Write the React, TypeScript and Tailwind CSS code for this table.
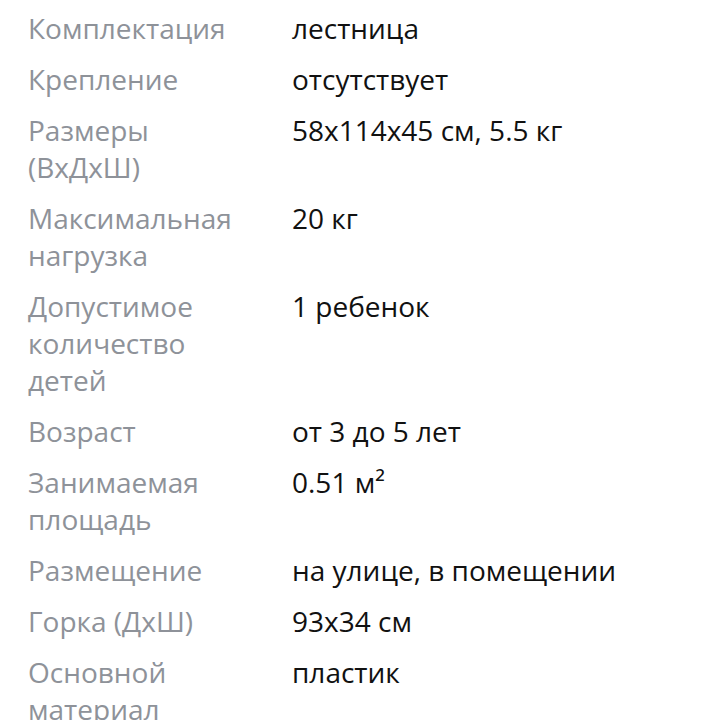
const rows: [string, string][] = [
  ['Комплектация', 'лестница'],
  ['Крепление', 'отсутствует'],
  ['Размеры (ВхДхШ)', '58x114x45 см, 5.5 кг'],
  ['Максимальная нагрузка', '20 кг'],
  ['Допустимое количество детей', '1 ребенок'],
  ['Возраст', 'от 3 до 5 лет'],
  ['Занимаемая площадь', '0.51 м²'],
  ['Размещение', 'на улице, в помещении'],
  ['Горка (ДхШ)', '93x34 см'],
  ['Основной материал', 'пластик'],
]

export default function App() {
  return (
    <div
      className="w-[720px] h-[720px] overflow-hidden bg-white pl-[28px] pt-[10px]"
      style={{ fontFamily: '"Open Sans", "Noto Sans", sans-serif' }}
    >
      <div className="flex flex-col gap-[14px]">
        {rows.map(([label, value]) => (
          <div key={label} className="flex text-[28px] leading-[37px]">
            <div className="w-[220px] shrink-0 text-[#8e9299]">{label}</div>
            <div className="ml-[44px] text-[#111]">{value}</div>
          </div>
        ))}
      </div>
    </div>
  )
}
